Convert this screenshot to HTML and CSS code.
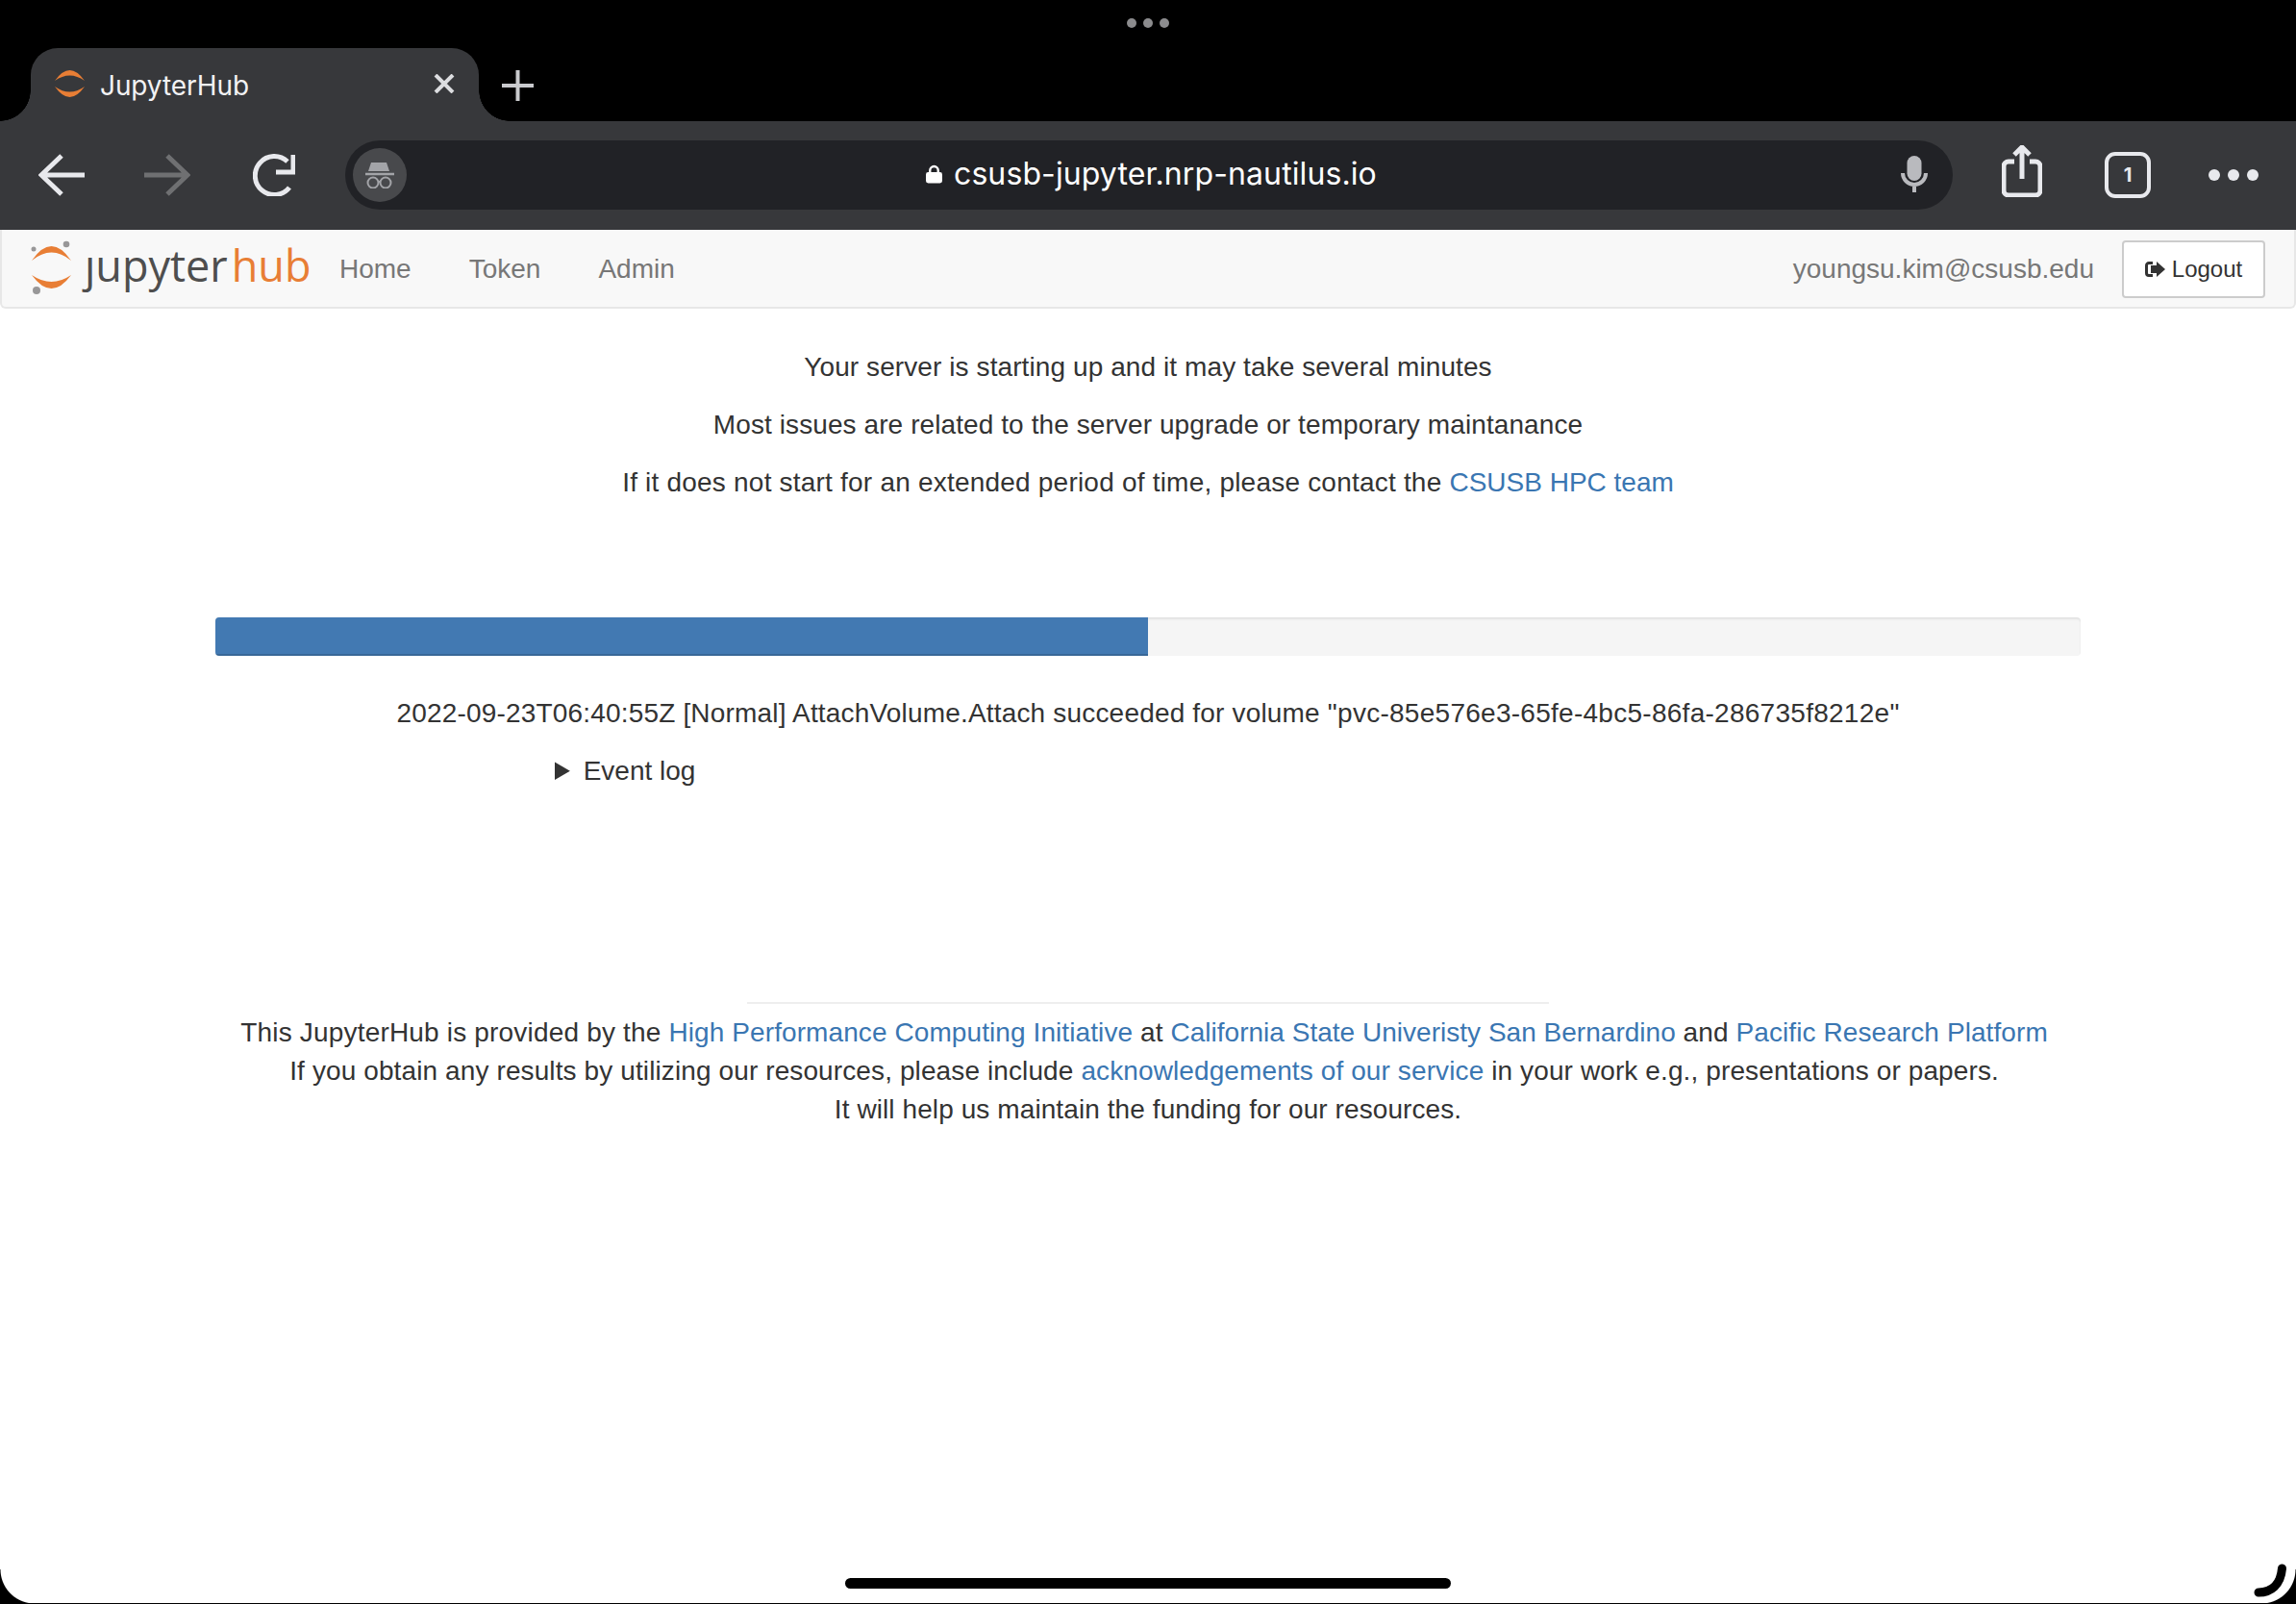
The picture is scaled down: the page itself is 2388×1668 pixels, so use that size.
FILE: index.html
```html
<!DOCTYPE html>
<html lang="en">
<head>
<meta charset="utf-8">
<title>JupyterHub</title>
<link rel="stylesheet" href="styles.css">
</head>
<body>
<div class="screen">
  <header class="tabstrip">
    <div class="grabber"><i></i><i></i><i></i></div>
    <div class="tab">
      <svg class="favicon" viewBox="0 0 31 30"><path class="orange" d="M0 12Q15.500-10 31 12Q15.500 1 0 12Z"/><path class="orange" d="M0 18Q15.500 40 31 18Q15.500 29 0 18Z"/></svg>
      <span class="tab-title">JupyterHub</span>
      <svg class="tab-close" viewBox="0 0 22 20"><path d="M2 1L20 19M20 1L2 19"/></svg>
    </div>
    <svg class="new-tab" viewBox="0 0 33 32"><path d="M0 16H33M16.500 0V32"/></svg>
  </header>
  <div class="toolbar">
    <svg class="ic back" viewBox="0 0 48 44"><path d="M24 2L3 22L24 42M3 22H48"/></svg>
    <svg class="ic forward" viewBox="0 0 48 44"><path d="M24 2L45 22L24 42M45 22H0"/></svg>
    <svg class="ic reload" viewBox="0 0 44 44"><path d="M36 8A20 20 0 1 0 38 35"/><path d="M42 1V19H24"/></svg>
    <div class="urlbar">
      <span class="incognito">
        <svg viewBox="0 0 30 28"><path class="fillhat" d="M6 1H22L25 10H3Z"/><path class="brim" d="M0 13H30"/><circle class="lens" cx="8" cy="22" r="5.500"/><circle class="lens" cx="21" cy="22" r="5.500"/><path class="brim thin" d="M13 21H16"/></svg>
      </span>
      <span class="address">
        <svg class="lock" viewBox="0 0 18 20"><path class="lock-shackle" d="M4.500 9V6a4.500 4.500 0 0 1 9 0v3"/><rect y="8" width="18" height="12" rx="2.500"/></svg>
        <span>csusb-jupyter.nrp-nautilus.io</span>
      </span>
      <svg class="mic" viewBox="0 0 28 38"><rect x="6.500" width="15" height="26" rx="7.500"/><path d="M2 18a12 12 0 0 0 24 0M14 30V38"/></svg>
    </div>
    <svg class="ic share" viewBox="0 0 42 54"><path d="M13 17H7a5 5 0 0 0-5 5v25a5 5 0 0 0 5 5h28a5 5 0 0 0 5-5V22a5 5 0 0 0-5-5h-6M21 35V3M13 10l8-8l8 8"/></svg>
    <span class="tabcount">1</span>
    <span class="more"><i></i><i></i><i></i></span>
  </div>
  <nav class="navbar">
    <a class="brand" href="#">
      <svg class="logo" viewBox="0 0 48 60"><path class="orange" d="M3 22Q23.500-8 44 22Q23.500 5 3 22Z"/><path class="orange" d="M3 37Q23.500 65 44 37Q23.500 51 3 37Z"/><circle class="grey" cx="5" cy="10" r="2.500"/><circle class="grey" cx="39" cy="5" r="3.300"/><circle class="grey" cx="8" cy="53" r="4"/></svg>
      <span class="wordmark">ȷupyter<b>hub</b></span>
    </a>
    <ul class="navlinks">
      <li><a href="#">Home</a></li>
      <li><a href="#">Token</a></li>
      <li><a href="#">Admin</a></li>
    </ul>
    <span class="user">youngsu.kim@csusb.edu</span>
    <a class="logout" href="#">
      <svg viewBox="0 0 21 16"><path class="log-frame" d="M8 1.500H4a2.500 2.500 0 0 0-2.500 2.500v8a2.500 2.500 0 0 0 2.500 2.500h4"/><path class="log-arrow" d="M12 0L21 8L12 16V12H6V4H12Z"/></svg>
      <span>Logout</span>
    </a>
  </nav>
  <main class="page">
    <p>Your server is starting up and it may take several minutes</p>
    <p>Most issues are related to the server upgrade or temporary maintanance</p>
    <p class="contact">If it does not start for an extended period of time, please contact the <a href="#">CSUSB HPC team</a></p>
    <div class="progress"><div class="bar" style="width:50%"></div></div>
    <p class="event">2022-09-23T06:40:55Z [Normal] AttachVolume.Attach succeeded for volume <span class="volume">"pvc-85e576e3-65fe-4bc5-86fa-286735f8212e"</span></p>
    <details class="log"><summary>Event log</summary></details>
    <hr class="rule">
    <footer class="foot">
      <div><span class="intro">This JupyterHub is provided by the </span><a href="#">High Performance Computing Initiative</a> at <a class="tight" href="#">California State Univeristy San Bernardino</a> and <a href="#">Pacific Research Platform</a>&nbsp;</div>
      <div class="second">If you obtain any results by utilizing our resources, please include <a href="#">acknowledgements of our service</a> in your work e.g., presentations or papers.&nbsp;</div>
      <div>It will help us maintain the funding for our resources.</div>
    </footer>
  </main>
  <span class="corner left"></span>
  <span class="corner right"></span>
  <span class="edge"></span>
  <span class="home"></span>
  <svg class="pencil" viewBox="0 0 40 40"><path d="M5 34C18 34 28 26 29.500 9"/></svg>
</div>
</body>
</html>
```

FILE: styles.css
```css
* { box-sizing: border-box; }
html, body { margin: 0; padding: 0; background: #fff; }
.screen {
  position: relative;
  width: 2388px;
  height: 1668px;
  overflow: hidden;
  display: flex;
  flex-direction: column;
  font-family: "Liberation Sans", Arial, sans-serif;
  font-size: 28px;
  line-height: 40px;
  color: #333;
}
a { color: #3a76b2; text-decoration: none; }
svg { display: block; flex: none; }

/* Tab strip */
.tabstrip {
  position: relative;
  height: 126px;
  flex: none;
  background: #000;
  display: flex;
  align-items: flex-end;
  padding-left: 32px;
}
.grabber {
  position: absolute;
  top: 19px;
  left: 1172px;
  display: flex;
  gap: 7px;
}
.grabber i { width: 10px; height: 10px; border-radius: 50%; background: #8c8c8e; }
.tab {
  position: relative;
  width: 466px;
  height: 76px;
  background: #37383b;
  border-radius: 28px 28px 0 0;
  display: flex;
  align-items: center;
  padding: 0 25px 0 25px;
  color: #f2f2f4;
  font-family: Inter, "Liberation Sans", sans-serif;
  font-size: 28px;
}
.tab::before, .tab::after {
  content: "";
  position: absolute;
  bottom: 0;
  width: 32px;
  height: 32px;
}
.tab::before { left: -32px; background: radial-gradient(circle at 0 0, #000 31.5px, #37383b 32px); }
.tab::after { right: -32px; background: radial-gradient(circle at 100% 0, #000 31.5px, #37383b 32px); }
.favicon { width: 31px; height: 30px; margin-bottom: 2px; }
.orange { fill: #e87e35; }
.grey { fill: #989798; }
.tab-title { margin: 2px 0 0 16px; flex: 1; letter-spacing: -.1px; }
.tab-close { width: 22px; height: 20px; margin-bottom: 2px; }
.tab-close path { fill: none; stroke: #dcdde0; stroke-width: 4; }
.new-tab { width: 33px; height: 32px; margin: 0 0 21px 24px; }
.new-tab path { fill: none; stroke: #c9cacd; stroke-width: 4; }

/* Toolbar */
.toolbar {
  height: 113px;
  flex: none;
  background: #37383b;
  display: flex;
  align-items: center;
  padding: 0 0 1px 40px;
}
.ic path { fill: none; stroke: #e8e9ed; stroke-width: 5; }
.back { width: 48px; height: 44px; }
.forward { width: 48px; height: 44px; margin-left: 62px; }
.forward path { stroke: #6f7072; }
.reload { width: 44px; height: 44px; margin-left: 65px; }
.urlbar {
  width: 1672px;
  height: 72px;
  margin-left: 52px;
  background: #212226;
  border-radius: 36px;
  display: flex;
  align-items: center;
  padding-left: 8px;
  color: #fff;
}
.incognito {
  width: 56px;
  height: 56px;
  border-radius: 50%;
  background: #48494c;
  display: flex;
  align-items: center;
  justify-content: center;
  flex: none;
}
.incognito svg { width: 30px; height: 28px; }
.fillhat { fill: #a3a4a8; }
.brim { fill: none; stroke: #a3a4a8; stroke-width: 2.500; }
.brim.thin { stroke-width: 2; }
.lens { fill: none; stroke: #a3a4a8; stroke-width: 2; }
.address {
  margin: 0 0 3px 540px;
  width: 1014px;
  display: flex;
  align-items: center;
  gap: 12px;
  font-family: Inter, "Liberation Sans", sans-serif;
  font-size: 32px;
  letter-spacing: .1px;
}
.lock { width: 17px; height: 20px; fill: #fff; }
.lock-shackle { fill: none; stroke: #fff; stroke-width: 2.500; }
.mic { width: 28px; height: 38px; margin-bottom: 2px; }
.mic rect { fill: #b9babe; }
.mic path { fill: none; stroke: #b9babe; stroke-width: 4; }
.share { width: 42px; height: 54px; margin: -8px 0 0 51px; }
.tabcount {
  width: 48px;
  height: 48px;
  margin-left: 65px;
  border: 4px solid #e8e9ed;
  border-radius: 11px;
  color: #e8e9ed;
  font-family: Inter, "Liberation Sans", sans-serif;
  font-size: 20px;
  font-weight: 700;
  line-height: 40px;
  text-align: center;
}
.more { display: flex; gap: 8px; margin-left: 60px; }
.more i { width: 12px; height: 12px; border-radius: 50%; background: #e8e9ed; }

/* Page navbar */
.navbar {
  height: 82px;
  flex: none;
  background: #f8f8f8;
  border: 2px solid #e7e7e7;
  border-top: 0;
  border-radius: 0 0 6px 6px;
  display: flex;
  align-items: center;
  padding-left: 28px;
}
.brand { display: flex; align-items: center; }
.logo { width: 48px; height: 60px; }
.wordmark {
  width: 236px;
  margin: -6px 0 0 10px;
  font-family: "Open Sans", "Noto Sans", sans-serif;
  font-size: 45px;
  line-height: 60px;
  color: #4e4e4e;
}
.wordmark b { font-weight: 400; color: #e87e35; margin-left: 4px; }
.navlinks {
  list-style: none;
  display: flex;
  margin: 2px 0 0 29px;
  padding: 0;
  gap: 60px;
}
.navlinks a { color: #777; }
.user { margin: 2px 0 0 auto; color: #777; }
.logout {
  width: 149px;
  height: 60px;
  margin: 1px 30px 0 29px;
  background: #fff;
  border: 2px solid #ccc;
  border-radius: 4px;
  color: #333;
  font-size: 24px;
  display: flex;
  align-items: center;
  justify-content: center;
  gap: 7px;
}
.logout svg { width: 21px; height: 16px; }
.log-frame { fill: none; stroke: #333; stroke-width: 3; }
.log-arrow { fill: #333; }

/* Page */
.page { flex: 1; padding-top: 41px; text-align: center; letter-spacing: .09px; }
.page p { margin: 0 0 20px; }
.page .contact { letter-spacing: .21px; }
.contact a { letter-spacing: 0; }
.page .event { letter-spacing: .18px; }
.volume { letter-spacing: .27px; }
.progress {
  width: 1940px;
  height: 40px;
  margin: 120px auto 40px;
  background: #f5f5f5;
  border-radius: 4px;
  overflow: hidden;
  box-shadow: inset 0 2px 2px rgba(0, 0, 0, .08);
}
.bar { height: 100%; background: #4279b2; box-shadow: inset 0 -2px 0 rgba(0, 0, 0, .15); }
.log { margin-left: 577px; text-align: left; letter-spacing: 0; }
.log summary { cursor: pointer; }
.rule {
  width: 834px;
  height: 2px;
  margin: 220px auto 0;
  border: 0;
  background: #eee;
}
.foot { padding-top: 10px; }
.intro { letter-spacing: .18px; }
.tight { letter-spacing: .02px; }
.second { letter-spacing: .11px; }

/* Screen overlays */
.corner { position: absolute; bottom: 0; width: 36px; height: 36px; }
.corner.left { left: 0; background: radial-gradient(circle at 100% 0, transparent 35px, #000 36px); }
.corner.right { right: 0; background: radial-gradient(circle at 0 0, transparent 35px, #000 36px); }
.edge { position: absolute; left: 0; right: 0; bottom: 0; height: 1px; background: #000; }
.home {
  position: absolute;
  left: 879px;
  bottom: 16px;
  width: 630px;
  height: 11px;
  border-radius: 6px;
  background: #000;
}
.pencil { position: absolute; left: 2344px; top: 1622px; width: 40px; height: 40px; }
.pencil path { fill: none; stroke: #000; stroke-width: 9; stroke-linecap: round; }
```
